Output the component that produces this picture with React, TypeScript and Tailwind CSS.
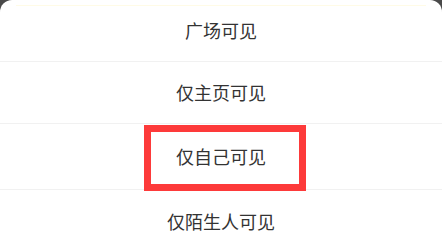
import React from 'react';

const options = [
  { label: '广场可见', h: 'h-[61px]' },
  { label: '仅主页可见', h: 'h-[61px]' },
  { label: '仅自己可见', h: 'h-[65px]' },
  { label: '仅陌生人可见', h: 'h-[62px]' },
];

export default function App() {
  return (
    <div className="w-[442px] h-[247px] overflow-hidden bg-[#4a4a4a]">
      <div
        className="relative bg-white rounded-t-[12px] h-full"
        style={{ fontFamily: '"Noto Sans CJK SC", "Noto Sans", sans-serif' }}
      >
        <div className="absolute left-[16px] right-[16px] top-[5px] h-px bg-[#fffbe6]" />
        {options.map((o, i) => (
          <div key={o.label}>
            {i > 0 && <div className="h-px bg-[#f1f1f1]" />}
            <div className={`${o.h} flex items-center justify-center text-[18px] text-[#333333]`}>
              {o.label}
            </div>
          </div>
        ))}
        {/* red highlight around the selected option */}
        <div className="absolute left-[144px] top-[125px] w-[162px] h-[66px] border-[7px] border-[#fd3a3a]" />
      </div>
    </div>
  );
}
